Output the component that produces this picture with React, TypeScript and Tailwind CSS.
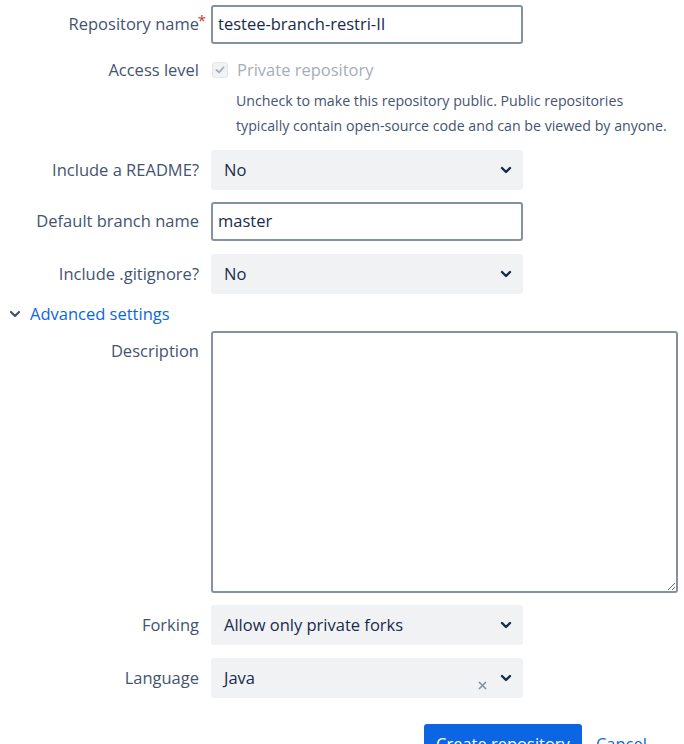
import React from "react";

const Chevron = () => (
  <svg width="12" height="8" viewBox="0 0 12 8" className="shrink-0">
    <path d="M2 2 L6 6 L10 2" fill="none" stroke="#172b4d" strokeWidth="2.4" strokeLinecap="round" strokeLinejoin="round" />
  </svg>
);

const Label = ({ children, required }: { children: React.ReactNode; required?: boolean }) => (
  <div className="w-[199px] shrink-0 text-right h-10 leading-10 text-[#44546f] relative whitespace-nowrap">
    {children}
    {required && <span className="absolute -right-[7px] top-[-4px] text-[#c9372c] text-[15px]">*</span>}
  </div>
);

const Select = ({ value, clear }: { value: string; clear?: boolean }) => (
  <div className="ml-3 w-[312px] h-10 rounded-[3px] bg-[#f1f2f4] flex items-center pl-[13px] pr-[11px] text-[#172b4d]">
    <span className="flex-1">{value}</span>
    {clear && (
      <svg width="11" height="11" viewBox="0 0 11 11" className="mr-[12px] mt-[15px]">
        <path d="M2 2 L9 9 M9 2 L2 9" stroke="#8590a2" strokeWidth="1.6" />
      </svg>
    )}
    <Chevron />
  </div>
);

export default function App() {
  return (
    <div
      className="w-[684px] h-[744px] overflow-hidden bg-white text-[16.5px]"
      style={{ fontFamily: '"Open Sans", "Noto Sans", sans-serif' }}
    >
      <div className="pt-[4px] flex flex-col">
        <div className="flex items-center">
          <Label required>Repository name</Label>
          <div className="ml-3 w-[312px] h-[39px] rounded-[3px] border-2 border-[#8590a2] flex items-center pl-[5px] text-[#172b4d]">
            testee-branch-restri-II
          </div>
        </div>

        <div className="flex mt-[6px]">
          <Label>Access level</Label>
          <div className="ml-3 flex flex-col">
            <div className="h-10 flex items-center">
              <span className="w-[16px] h-[16px] rounded-[3px] bg-[#f1f2f4] border border-[#e4e6ea] flex items-center justify-center ml-[1px]">
                <svg width="10" height="8" viewBox="0 0 10 8">
                  <path d="M1.5 4 L4 6.3 L8.5 1.5" fill="none" stroke="#a5adba" strokeWidth="1.8" strokeLinecap="round" strokeLinejoin="round" />
                </svg>
              </span>
              <span className="ml-[9px] text-[#a5adba]">Private repository</span>
            </div>
            <div className="pl-[25px] text-[14.2px] leading-[25px] text-[#44546f] -mt-[2px] whitespace-nowrap">
              Uncheck to make this repository public. Public repositories
              <br />
              typically contain open-source code and can be viewed by anyone.
            </div>
          </div>
        </div>

        <div className="flex items-center mt-[12px]">
          <Label>Include a README?</Label>
          <Select value="No" />
        </div>

        <div className="flex items-center mt-[11px]">
          <Label>Default branch name</Label>
          <div className="ml-3 w-[312px] h-[39px] rounded-[3px] border-2 border-[#8590a2] flex items-center pl-[5px] text-[#172b4d]">
            master
          </div>
        </div>

        <div className="flex items-center mt-[13px]">
          <Label>Include .gitignore?</Label>
          <Select value="No" />
        </div>

        <div className="flex items-center h-5 mt-[10px] text-[#0c66e4]">
          <svg width="12" height="8" viewBox="0 0 12 8" className="ml-[9px]">
            <path d="M2 2 L6 6 L10 2" fill="none" stroke="#44546f" strokeWidth="2.2" strokeLinecap="round" strokeLinejoin="round" />
          </svg>
          <span className="ml-[9px]">Advanced settings</span>
        </div>

        <div className="flex mt-[7px]">
          <Label>Description</Label>
          <textarea
            className="ml-3 w-[467px] h-[262px] rounded-[3px] border-2 border-[#8590a2] outline-none resize p-1"
            defaultValue=""
          />
        </div>

        <div className="flex items-center mt-[12px]">
          <Label>Forking</Label>
          <Select value="Allow only private forks" />
        </div>

        <div className="flex items-center mt-[13px]">
          <Label>Language</Label>
          <Select value="Java" clear />
        </div>

        <div className="flex items-center mt-[26px] ml-[424px]">
          <button className="h-10 px-[12px] rounded-[3px] bg-[#0c66e4] text-white whitespace-nowrap">Create repository</button>
          <span className="ml-[14px] text-[#0c66e4]">Cancel</span>
        </div>
      </div>
    </div>
  );
}
